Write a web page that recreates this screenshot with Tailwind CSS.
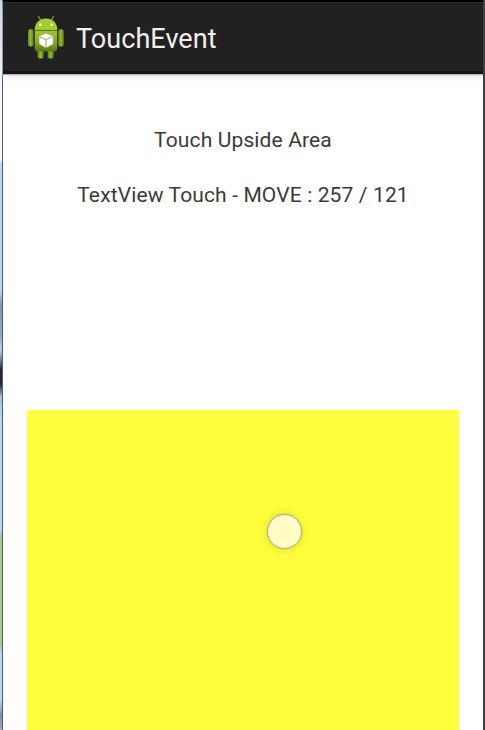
<!DOCTYPE html>
<html lang="en">
<head>
<meta charset="utf-8">
<title>TouchEvent</title>
<script src="https://cdn.jsdelivr.net/npm/@tailwindcss/browser@4"></script>
</head>
<body class="flex w-[485px] h-[730px] overflow-hidden bg-white font-['Roboto',sans-serif]">
  <div class="w-[2px] shrink-0 bg-[linear-gradient(to_bottom,#bcd3ea_0px,#d9e9f7_40px,#f4faff_90px,#f4faff_160px,#b9d8fa_164px,#b9d8fa_290px,#8197b0_305px,#8fa9c6_335px,#b5d3f1_350px,#26282c_370px,#26282c_384px,#a5c1de_397px,#b9d8f8_420px,#b9d8f8_530px,#a9c98c_535px,#a9c98c_645px,#b9d8f8_652px,#b9d8f8_700px,#7f90a6_715px,#aaa9c0_730px)]"></div>
  <div class="w-px shrink-0 bg-[#4c5b6c]"></div>
  <main class="flex flex-col w-[480px] shrink-0">
    <header class="flex items-center h-[74px] shrink-0 bg-[#212121] border-t-2 border-black pl-[24px] shadow-[inset_0_1px_0_#2d2d2d,inset_0_-3px_0_#151515,0_1px_1px_#b5b1b3,0_2px_7px_#e9e2e6]">
      <svg class="w-[38px] h-[44px] shrink-0 -mt-[2px]" viewBox="0 0 38 44">
        <defs>
          <linearGradient id="body" x1="0" y1="0" x2="0" y2="1"><stop offset="0" stop-color="#a0c636"/><stop offset=".55" stop-color="#87a928"/><stop offset="1" stop-color="#587713"/></linearGradient>
          <linearGradient id="limb" x1="0" y1="0" x2="1" y2="0"><stop offset="0" stop-color="#66831f"/><stop offset=".45" stop-color="#93b735"/><stop offset="1" stop-color="#5e7c17"/></linearGradient>
        </defs>
        <path d="M11.400 1.500 14 5.500M26.600 1.500 24 5.500" stroke="#8aab32" stroke-width="1.100" stroke-linecap="round"/>
        <rect x="1" y="14.200" width="5.600" height="17.300" rx="2.200" fill="url(#limb)"/>
        <rect x="31.200" y="14.200" width="5.600" height="17.300" rx="2.200" fill="url(#limb)"/>
        <rect x="10.700" y="32" width="6" height="11.500" rx="2.600" fill="url(#limb)"/>
        <rect x="20.700" y="32" width="6" height="11.500" rx="2.600" fill="url(#limb)"/>
        <path d="M7.800 15.600h22.400v17.600q0 3.300-3.300 3.300H11.100q-3.300 0-3.300-3.300Z" fill="url(#body)"/>
        <path d="M7.600 15C8 7.500 12.500 3.500 19 3.500S30 7.500 30.400 15Z" fill="#a5cb37"/>
        <path d="M7.800 15.400h22.400" stroke="#5f7d16" stroke-width="1"/>
        <circle cx="13.300" cy="9.700" r="1.200" fill="#fff"/><circle cx="24.700" cy="9.700" r="1.200" fill="#fff"/>
        <path d="M19 18.400 25.900 21.300v7.600L19 32.800l-6.700-3.900v-7.600Z" fill="#fff"/>
        <path d="M12.500 21.600 19 24.800l6.700-3.200M19 24.800v7.700" fill="none" stroke="#94a86b" stroke-width="1"/>
      </svg>
      <h1 class="ml-[11px] mt-px text-[27px] leading-[36px] tracking-[0.05px] text-[#f3eff1] whitespace-nowrap">TouchEvent</h1>
    </header>
    <section class="flex flex-col items-center h-[336px] shrink-0 pt-[51px] text-[21px] leading-[30px] text-[#3a3a3a]">
      <p class="whitespace-nowrap tracking-[0.13px]">Touch Upside Area</p>
      <p class="mt-[25px] whitespace-nowrap tracking-[0.13px]">TextView Touch - MOVE : 257 / 121</p>
    </section>
    <section class="relative mx-[24px] h-[320px] shrink-0 bg-[#ffff40]">
      <div class="absolute left-[240px] top-[104px] size-[35px] rounded-full border-[1.500px] border-[#a5ad78] bg-[radial-gradient(circle,#fffbbc_0%,#fffccb_70%,#fffddb_100%)] shadow-[0_0_3px_#c5c950,0_0_4px_6px_#f7f73a]"></div>
    </section>
  </main>
  <div class="w-[2px] shrink-0 bg-[#404040]"></div>
</body>
</html>
